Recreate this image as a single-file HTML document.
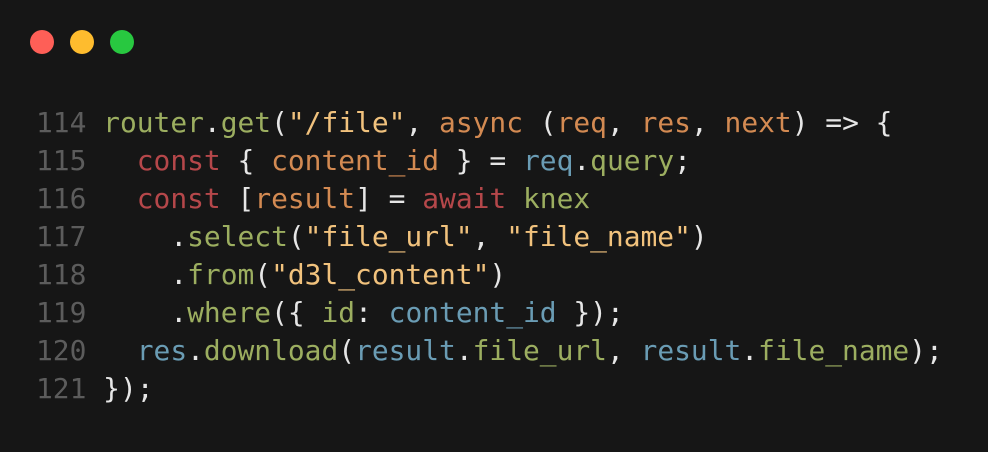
<html><head><style>
body{margin:0;width:988px;height:452px;background:#161616;overflow:hidden}
.d{position:absolute;top:30px;width:24px;height:24px;border-radius:50%}
pre{position:absolute;left:36px;top:104px;margin:0;font-family:"DejaVu Sans Mono","Liberation Mono",monospace;font-size:27.9px;line-height:38px;color:#e6e6e6}
.n{color:#5c5c5c}.g{color:#9cae60}.o{color:#d38a52}.r{color:#b5474a}.b{color:#6a9cb4}.s{color:#f1c27d}
</style></head><body>
<div class="d" style="left:30px;background:#fe5f57"></div>
<div class="d" style="left:70px;background:#febc2e"></div>
<div class="d" style="left:110px;background:#28c840"></div>
<pre><span class="n">114</span> <span class="g">router</span>.<span class="g">get</span>(<span class="s">"/file"</span>, <span class="o">async</span> (<span class="o">req</span>, <span class="o">res</span>, <span class="o">next</span>) =&gt; {
<span class="n">115</span>   <span class="r">const</span> { <span class="o">content_id</span> } = <span class="b">req</span>.<span class="g">query</span>;
<span class="n">116</span>   <span class="r">const</span> [<span class="o">result</span>] = <span class="r">await</span> <span class="g">knex</span>
<span class="n">117</span>     .<span class="g">select</span>(<span class="s">"file_url"</span>, <span class="s">"file_name"</span>)
<span class="n">118</span>     .<span class="g">from</span>(<span class="s">"d3l_content"</span>)
<span class="n">119</span>     .<span class="g">where</span>({ <span class="g">id</span>: <span class="b">content_id</span> });
<span class="n">120</span>   <span class="b">res</span>.<span class="g">download</span>(<span class="b">result</span>.<span class="g">file_url</span>, <span class="b">result</span>.<span class="g">file_name</span>);
<span class="n">121</span> });</pre>
</body></html>
